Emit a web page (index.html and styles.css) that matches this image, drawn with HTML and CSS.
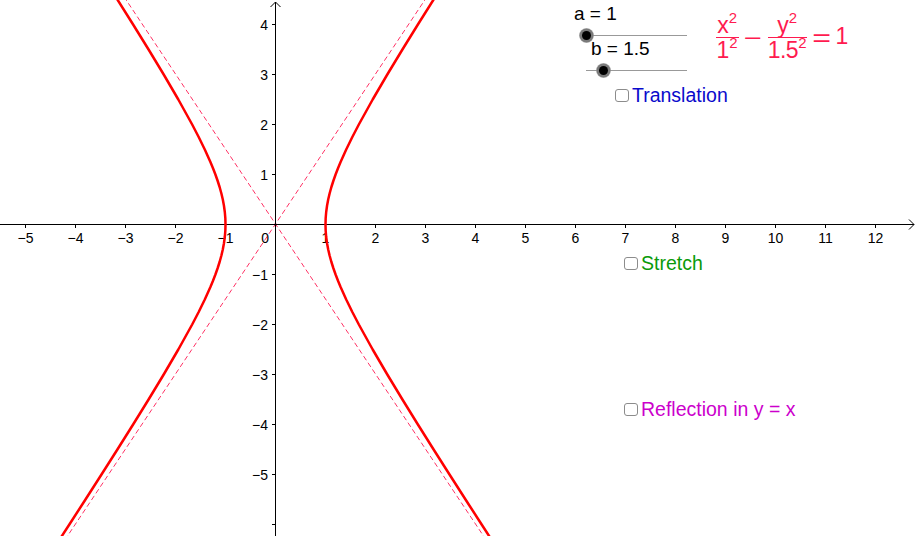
FILE: index.html
```html
<!DOCTYPE html>
<html>
<head>
<meta charset="utf-8">
<link rel="stylesheet" href="styles.css">
</head>
<body>
<div class="canvas">
  <svg class="graph" width="917" height="536" viewBox="0 0 917 536">
    <g class="asymptotes">
      <line x1="431.5" y1="-10" x2="60.83" y2="546"/>
      <line x1="119.5" y1="-10" x2="490.17" y2="546"/>
    </g>
    <g class="axes">
      <line x1="0" y1="224.5" x2="914" y2="224.5"/>
      <polyline class="arrow" points="909,219.5 914,224.5 909,229.5"/>
      <line x1="275.5" y1="2" x2="275.5" y2="536"/>
      <polyline class="arrow" points="270.5,7 275.5,2 280.5,7"/>
    </g>
    <g class="ticks">
      <line x1="25.5" y1="224.5" x2="25.5" y2="228"/>
      <line x1="75.5" y1="224.5" x2="75.5" y2="228"/>
      <line x1="125.5" y1="224.5" x2="125.5" y2="228"/>
      <line x1="175.5" y1="224.5" x2="175.5" y2="228"/>
      <line x1="225.5" y1="224.5" x2="225.5" y2="228"/>
      <line x1="325.5" y1="224.5" x2="325.5" y2="228"/>
      <line x1="375.5" y1="224.5" x2="375.5" y2="228"/>
      <line x1="425.5" y1="224.5" x2="425.5" y2="228"/>
      <line x1="475.5" y1="224.5" x2="475.5" y2="228"/>
      <line x1="525.5" y1="224.5" x2="525.5" y2="228"/>
      <line x1="575.5" y1="224.5" x2="575.5" y2="228"/>
      <line x1="625.5" y1="224.5" x2="625.5" y2="228"/>
      <line x1="675.5" y1="224.5" x2="675.5" y2="228"/>
      <line x1="725.5" y1="224.5" x2="725.5" y2="228"/>
      <line x1="775.5" y1="224.5" x2="775.5" y2="228"/>
      <line x1="825.5" y1="224.5" x2="825.5" y2="228"/>
      <line x1="875.5" y1="224.5" x2="875.5" y2="228"/>
      <line x1="272" y1="24.5" x2="275.5" y2="24.5"/>
      <line x1="272" y1="74.5" x2="275.5" y2="74.5"/>
      <line x1="272" y1="124.5" x2="275.5" y2="124.5"/>
      <line x1="272" y1="174.5" x2="275.5" y2="174.5"/>
      <line x1="272" y1="274.5" x2="275.5" y2="274.5"/>
      <line x1="272" y1="324.5" x2="275.5" y2="324.5"/>
      <line x1="272" y1="374.5" x2="275.5" y2="374.5"/>
      <line x1="272" y1="424.5" x2="275.5" y2="424.5"/>
      <line x1="272" y1="474.5" x2="275.5" y2="474.5"/>
      <line x1="272" y1="524.5" x2="275.5" y2="524.5"/>
    </g>
    <g class="xlabels">
      <text x="25.5" y="243">−5</text>
      <text x="75.5" y="243">−4</text>
      <text x="125.5" y="243">−3</text>
      <text x="175.5" y="243">−2</text>
      <text x="225.5" y="243">−1</text>
      <text x="325.5" y="243">1</text>
      <text x="375.5" y="243">2</text>
      <text x="425.5" y="243">3</text>
      <text x="475.5" y="243">4</text>
      <text x="525.5" y="243">5</text>
      <text x="575.5" y="243">6</text>
      <text x="625.5" y="243">7</text>
      <text x="675.5" y="243">8</text>
      <text x="725.5" y="243">9</text>
      <text x="775.5" y="243">10</text>
      <text x="825.5" y="243">11</text>
      <text x="875.5" y="243">12</text>
    </g>
    <g class="ylabels">
      <text x="269" y="243">0</text>
      <text x="268" y="29.5">4</text>
      <text x="268" y="79.5">3</text>
      <text x="268" y="129.5">2</text>
      <text x="268" y="179.5">1</text>
      <text x="268" y="279.5">−1</text>
      <text x="268" y="329.5">−2</text>
      <text x="268" y="379.5">−3</text>
      <text x="268" y="429.5">−4</text>
      <text x="268" y="479.5">−5</text>
    </g>
    <g class="curve" transform="translate(0,0.5)">
      <polyline points="443.13,-16 433.61,-1 417.90,24 402.43,49 387.30,74 372.68,99 358.83,124 352.33,136.5 346.21,149 340.59,161.5 338.00,167.75 335.59,174 333.39,180.25 331.40,186.5 329.67,192.75 328.20,199 327.04,205.25 326.19,211.5 325.67,217.75 325.50,224 325.67,230.25 326.19,236.5 327.04,242.75 328.20,249 329.67,255.25 331.40,261.5 333.39,267.75 335.59,274 338.00,280.25 340.59,286.5 346.21,299 352.33,311.5 358.83,324 372.68,349 387.30,374 402.43,399 417.90,424 433.61,449 449.51,474 465.53,499 481.66,524 497.86,549"/>
      <polyline points="107.87,-16 117.39,-1 133.10,24 148.57,49 163.70,74 178.32,99 192.17,124 198.67,136.5 204.79,149 210.41,161.5 213.00,167.75 215.41,174 217.61,180.25 219.60,186.5 221.33,192.75 222.80,199 223.96,205.25 224.81,211.5 225.33,217.75 225.50,224 225.33,230.25 224.81,236.5 223.96,242.75 222.80,249 221.33,255.25 219.60,261.5 217.61,267.75 215.41,274 213.00,280.25 210.41,286.5 204.79,299 198.67,311.5 192.17,324 178.32,349 163.70,374 148.57,399 133.10,424 117.39,449 101.49,474 85.47,499 69.34,524 53.14,549"/>
    </g>
  </svg>

  <div class="slider slider-a">
    <div class="slider-label">a = 1</div>
    <div class="track"><div class="knob"></div></div>
  </div>

  <div class="slider slider-b">
    <div class="slider-label">b = 1.5</div>
    <div class="track"><div class="knob"></div></div>
  </div>

  <div class="formula">
    <div class="frac frac-1">
      <div class="num">x<span class="sup">2</span></div>
      <div class="bar"></div>
      <div class="den">1<span class="sup">2</span></div>
    </div>
    <div class="op minus">−</div>
    <div class="frac frac-2">
      <div class="num">y<span class="sup">2</span></div>
      <div class="bar"></div>
      <div class="den">1.5<span class="sup">2</span></div>
    </div>
    <div class="op equals">=</div>
    <div class="rhs">1</div>
  </div>

  <label class="check check-translation">
    <span class="box"></span><span class="check-text">Translation</span>
  </label>
  <label class="check check-stretch">
    <span class="box"></span><span class="check-text">Stretch</span>
  </label>
  <label class="check check-reflection">
    <span class="box"></span><span class="check-text">Reflection in y = x</span>
  </label>
</div>
</body>
</html>
```

FILE: styles.css
```css
html, body {
  margin: 0;
  padding: 0;
  background: #ffffff;
}

body {
  font-family: "Liberation Sans", Arial, sans-serif;
  overflow: hidden;
}

.canvas {
  position: relative;
  width: 917px;
  height: 536px;
  overflow: hidden;
  background: #ffffff;
}

.graph {
  display: block;
  position: absolute;
  left: 0;
  top: 0;
}

.axes line,
.axes polyline,
.ticks line {
  stroke: #000000;
  stroke-width: 1;
  fill: none;
}

.axes .arrow {
  stroke-linejoin: miter;
}

.asymptotes line {
  stroke: #ff3366;
  stroke-width: 1;
  stroke-dasharray: 5 3;
}

.curve polyline {
  fill: none;
  stroke: #ff0000;
  stroke-width: 2.5;
  stroke-linejoin: round;
  stroke-linecap: round;
}

.xlabels text,
.ylabels text {
  font-family: "Liberation Sans", Arial, sans-serif;
  font-size: 14px;
  fill: #000000;
}

.xlabels text {
  text-anchor: middle;
}

.ylabels text {
  text-anchor: end;
}

/* sliders */
.slider {
  position: absolute;
  color: #000000;
}

.slider-label {
  font-size: 19px;
  line-height: 19px;
  white-space: nowrap;
}

.track {
  position: relative;
  height: 1px;
  margin-top: 11.5px;
  background: #999999;
}

.knob {
  position: absolute;
  top: -4px;
  width: 9px;
  height: 9px;
  border-radius: 50%;
  background: #000000;
  box-shadow: 0 0 0 2.5px #7a7a7a, 0 0 0 3px rgba(160, 160, 160, 0.6);
}

.slider-a {
  left: 574px;
  top: 4px;
}

.slider-a .track {
  margin-left: 9px;
  width: 104px;
}

.slider-a .knob {
  left: -1.5px;
}

.slider-b {
  left: 586px;
  top: 39px;
}

.slider-b .slider-label {
  margin-left: 5px;
}

.slider-b .track {
  width: 101px;
}

.slider-b .knob {
  left: 12.5px;
}

/* formula */
.formula {
  position: absolute;
  left: 715.5px;
  top: 14.25px;
  display: flex;
  align-items: center;
  color: #ff1a4f;
  font-size: 23px;
}

.frac {
  display: flex;
  flex-direction: column;
  align-items: stretch;
  text-align: center;
}

.num,
.den {
  line-height: 22px;
  height: 22px;
  white-space: nowrap;
  padding: 0 1px;
}

.frac-2 .den {
  padding: 0;
  letter-spacing: -0.5px;
}

.bar {
  height: 1.5px;
  margin: 0.5px 0;
  background: #ff1a4f;
}

.sup {
  font-size: 15px;
  line-height: 0;
  vertical-align: 10px;
  letter-spacing: 0;
}

.op {
  line-height: 22px;
}

.minus {
  margin-left: 7px;
  margin-right: 8.6px;
  transform: scaleX(1.35);
}

.equals {
  margin-left: 8.8px;
  margin-right: 6.8px;
  transform: scaleX(1.4);
}

.rhs {
  line-height: 22px;
  margin-bottom: 4px;
}

/* checkboxes */
.check {
  position: absolute;
  display: flex;
  align-items: center;
  gap: 3px;
  font-size: 19.5px;
  line-height: 20px;
  white-space: nowrap;
}

.box {
  box-sizing: border-box;
  width: 14px;
  height: 13px;
  border: 1.5px solid #8c8c8c;
  border-radius: 3px;
  background: #ffffff;
}

.check-translation {
  left: 615px;
  top: 85px;
  color: #0a0acc;
}

.check-stretch {
  left: 624px;
  top: 253px;
  color: #0a9a0a;
}

.check-reflection {
  left: 624px;
  top: 399px;
  color: #cc00cc;
}
```
